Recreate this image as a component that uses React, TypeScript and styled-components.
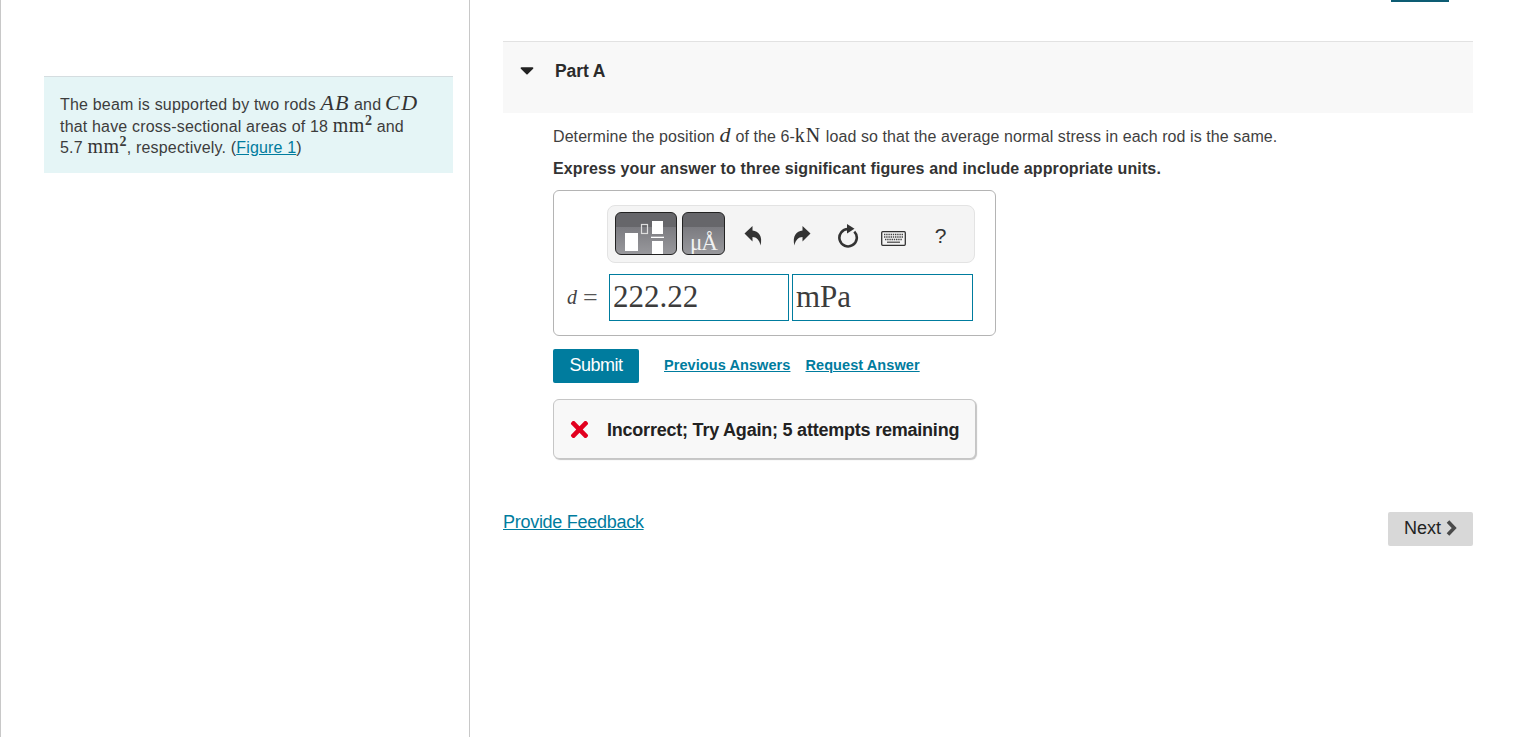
import styled, { createGlobalStyle } from 'styled-components';
import { FaCaretDown, FaTimes } from 'react-icons/fa';

const GlobalStyle = createGlobalStyle`
  html, body {
    margin: 0;
    padding: 0;
    background: #fff;
    overflow: hidden;
  }
  body {
    font-family: "Liberation Sans", Arial, sans-serif;
    color: #333;
  }
`;

const Page = styled.div`
  display: flex;
  height: 737px;
  width: 1529px;
  position: relative;
`;

const TopMark = styled.div`
  position: absolute;
  top: 0;
  left: 1391px;
  width: 58px;
  height: 2px;
  background: #0d5c73;
`;

const LeftColumn = styled.aside`
  box-sizing: border-box;
  width: 470px;
  flex: none;
  border-left: 1px solid #c8c8c8;
  border-right: 1px solid #c8c8c8;
  padding: 76px 16px 0 43px;
`;

const InfoBox = styled.div`
  box-sizing: border-box;
  height: 97px;
  background: #e5f5f6;
  border-top: 1px solid #d5dde0;
  padding: 17px 10px 0 16px;
  font-size: 16px;
  line-height: 21.5px;
  color: #3d3d3d;
  letter-spacing: 0.18px;
  white-space: nowrap;
`;

const Math = styled.span<{ $size?: number; $spacing?: number; $shift?: number }>`
  font-family: "Liberation Serif", "Times New Roman", serif;
  font-size: ${(p) => p.$size ?? 20}px;
  line-height: 0;
  letter-spacing: ${(p) => p.$spacing ?? 0.5}px;
  margin-left: ${(p) => p.$shift ?? 0}px;
  color: #333;
`;

const MathVar = styled(Math)`
  font-style: italic;
`;

const Sup = styled.sup`
  font-family: "Liberation Serif", serif;
  font-weight: bold;
  font-size: 14px;
  line-height: 0;
  vertical-align: 7px;
`;

const TextLink = styled.a`
  color: #007c9e;
  text-decoration: underline;
  cursor: pointer;
`;

const Main = styled.main`
  flex: 1;
  padding: 41px 56px 0 33px;
  min-width: 0;
`;

const PartHeader = styled.div`
  box-sizing: border-box;
  height: 72px;
  background: #f8f8f8;
  border-top: 1px solid #e2e2e2;
  display: flex;
  align-items: flex-start;
  padding: 18px 0 0 16px;
  gap: 20px;
`;

const Caret = styled.span`
  display: flex;
  width: 16px;
  height: 20px;
  align-items: center;
  justify-content: center;
  color: #222;
  font-size: 22px;
`;

const PartTitle = styled.h2`
  margin: 0;
  font-size: 17.5px;
  line-height: 22px;
  font-weight: bold;
  color: #2b2b2b;
  letter-spacing: -0.1px;
`;

const PartBody = styled.div`
  padding: 12px 0 0 50px;
`;

const Question = styled.p`
  margin: 0;
  font-size: 16px;
  line-height: 23px;
  color: #3f3f3f;
  letter-spacing: 0.08px;
`;

const Instruction = styled.p`
  margin: 9px 0 0;
  font-size: 16px;
  line-height: 23px;
  font-weight: bold;
  color: #333;
  letter-spacing: 0.11px;
`;

const AnswerBox = styled.div`
  box-sizing: border-box;
  margin-top: 10px;
  width: 443px;
  height: 146px;
  border: 1px solid #b4b4b4;
  border-radius: 6px;
  padding: 14px 0 0 13px;
`;

const Toolbar = styled.div`
  box-sizing: border-box;
  margin-left: 40px;
  width: 368px;
  height: 58px;
  background: #f4f4f4;
  border: 1px solid #e3e3e3;
  border-radius: 8px;
  display: flex;
  align-items: center;
  padding: 0 0 0 7px;
`;

const TemplateButton = styled.div<{ $width: number }>`
  box-sizing: border-box;
  position: relative;
  flex: none;
  width: ${(p) => p.$width}px;
  height: 43px;
  margin: 0 5px 2px 0;
  border: 1px solid #222;
  border-radius: 6px;
  overflow: hidden;
  background: linear-gradient(#66666a 0 14px, #7b7b80 14px, #98989c 100%);
  color: #fff;
`;

const UnitsGlyph = styled.span`
  position: absolute;
  left: 7px;
  bottom: -2px;
  font-family: "Liberation Serif", serif;
  font-size: 23px;
  line-height: 26px;
  letter-spacing: -1px;
  color: #f2f2f2;
  white-space: nowrap;
`;

const ToolIcon = styled.span<{ $width: number }>`
  display: flex;
  flex: none;
  width: ${(p) => p.$width}px;
  height: 32px;
  margin-top: 3px;
  align-items: center;
  justify-content: center;
  color: #333;
  font-size: 21px;
`;

const KeyboardSvg = styled.svg`
  margin-top: 6px;
`;

const InputRow = styled.div`
  display: flex;
  align-items: center;
  margin-top: 11px;
`;

const InputLabel = styled.span`
  flex: none;
  box-sizing: border-box;
  width: 29px;
  margin-right: 13px;
  font-family: "Liberation Serif", serif;
  font-size: 20px;
  color: #444;
  white-space: nowrap;
`;

const LabelVar = styled.i`
  margin-right: 6px;
`;

const LabelEquals = styled.span`
  font-size: 26px;
  line-height: 0;
  vertical-align: -2px;
  color: #555;
`;

const AnswerField = styled.div<{ $width: number }>`
  box-sizing: border-box;
  flex: none;
  width: ${(p) => p.$width}px;
  height: 47px;
  margin-right: 3px;
  border: 1px solid #007c9e;
  padding-left: 3px;
  font-family: "Liberation Serif", serif;
  font-size: 31px;
  line-height: 44px;
  color: #3c3c3c;
`;

const Actions = styled.div`
  display: flex;
  align-items: center;
  margin-top: 13px;
`;

const SubmitButton = styled.button`
  width: 86px;
  height: 34px;
  background: #007c9e;
  border: none;
  border-radius: 2px;
  color: #fff;
  font-family: "Liberation Sans", Arial, sans-serif;
  font-size: 18px;
  letter-spacing: -0.5px;
  padding: 0 0 2px;
  margin-right: 25px;
`;

const ActionLink = styled(TextLink)`
  font-size: 14.5px;
  font-weight: bold;
  margin: 0 15px 2px 0;
  letter-spacing: 0.08px;
`;

const Feedback = styled.div`
  box-sizing: border-box;
  margin-top: 16px;
  width: 423px;
  height: 60px;
  background: #f8f8f8;
  border: 1px solid #c6c6c6;
  border-radius: 6px;
  box-shadow: 1px 1px 1px #c4c4c4;
  display: flex;
  align-items: center;
  padding-left: 13px;
`;

const CrossIcon = styled.span`
  display: flex;
  color: #e2001f;
  font-size: 25px;
  margin-right: 15px;
`;

const FeedbackText = styled.span`
  margin-top: 2px;
  font-size: 18px;
  font-weight: bold;
  color: #222;
  letter-spacing: -0.22px;
`;

const Footer = styled.div`
  display: flex;
  justify-content: space-between;
  align-items: flex-start;
  margin-top: 52px;
`;

const FeedbackLink = styled(TextLink)`
  font-size: 18px;
  line-height: 22px;
  letter-spacing: -0.28px;
`;

const NextButton = styled.button`
  width: 85px;
  height: 34px;
  margin-top: 1px;
  background: #d8d8d8;
  border: none;
  border-radius: 2px;
  display: flex;
  align-items: center;
  justify-content: center;
  gap: 5px;
  padding: 0 0 2px;
  color: #222;
  font-family: "Liberation Sans", Arial, sans-serif;
  font-size: 18px;
`;

const TemplateIcon = () => (
  <svg width="60" height="41" viewBox="0 0 60 41" style={{ position: 'absolute', left: 0, top: 0 }}>
    <rect x="9" y="20" width="13" height="18" fill="#fff" />
    <rect x="25.5" y="11.5" width="6" height="9" fill="none" stroke="#ddd" strokeWidth="1.2" />
    <rect x="36" y="8" width="11" height="13" fill="#fff" />
    <rect x="35" y="23.7" width="13" height="1.3" fill="#fff" />
    <rect x="36" y="28" width="11" height="13" fill="#fff" />
  </svg>
);

const UndoIcon = ({ flip }: { flip?: boolean }) => (
  <svg width="19" height="21" viewBox="0 0 19 21" style={flip ? { transform: 'scaleX(-1)' } : undefined}>
    <path d="M0.5 8.5 L8.5 1 V5.5 C14.5 6 19 11 16.5 20.5 C15.5 15 12.5 12 8.5 12 V16.5 Z" fill="#333" />
  </svg>
);

const RefreshIcon = () => (
  <svg width="22" height="24" viewBox="0 0 22 24">
    <path d="M17.3 7.6 A8.7 8.7 0 1 1 11 5" fill="none" stroke="#333" strokeWidth="2.6" />
    <path d="M10 0 L17.5 4.8 L10 9.5 Z" fill="#333" />
  </svg>
);

const KeyboardIcon = () => (
  <KeyboardSvg width="25" height="15" viewBox="0 0 25 15">
    <rect x="0.7" y="0.7" width="23.6" height="13.6" rx="1" fill="#f4f4f4" stroke="#333" strokeWidth="1.3" />
    <path d="M3 3.5h19M3 6h19M4 8.5h17" stroke="#444" strokeWidth="1.3" strokeDasharray="1.4 .8" fill="none" />
    <path d="M6 11.2h13" stroke="#444" strokeWidth="1.2" fill="none" />
  </KeyboardSvg>
);

const NextChevron = () => (
  <svg width="11" height="16" viewBox="0 0 11 16">
    <path d="M2 1.5 L8.2 8 L2 14.5" fill="none" stroke="#4a4a4a" strokeWidth="3.6" />
  </svg>
);

export default function App() {
  return (
    <Page>
      <GlobalStyle />
      <TopMark />
      <LeftColumn>
        <InfoBox>
          The beam is supported by two rods <MathVar $size={22} $spacing={1}>AB</MathVar> and{' '}
          <MathVar $size={22} $spacing={1.6} $shift={-1}>CD</MathVar>
          <br />
          that have cross-sectional areas of 18 <Math>mm</Math>
          <Sup>2</Sup> and
          <br />
          5.7 <Math>mm</Math>
          <Sup>2</Sup>, respectively. (<TextLink>Figure 1</TextLink>)
        </InfoBox>
      </LeftColumn>
      <Main>
        <PartHeader>
          <Caret>
            <FaCaretDown />
          </Caret>
          <PartTitle>Part A</PartTitle>
        </PartHeader>
        <PartBody>
          <Question>
            Determine the position <MathVar $size={22}>d</MathVar> of the 6-<Math $size={20} $spacing={1}>kN</Math> load so that the average normal stress in each rod is the same.
          </Question>
          <Instruction>Express your answer to three significant figures and include appropriate units.</Instruction>
          <AnswerBox>
            <Toolbar>
              <TemplateButton $width={62}>
                <TemplateIcon />
              </TemplateButton>
              <TemplateButton $width={43}>
                <UnitsGlyph>μÅ</UnitsGlyph>
              </TemplateButton>
              <ToolIcon $width={47}>
                <UndoIcon />
              </ToolIcon>
              <ToolIcon $width={48}>
                <UndoIcon flip />
              </ToolIcon>
              <ToolIcon $width={45}>
                <RefreshIcon />
              </ToolIcon>
              <ToolIcon $width={47}>
                <KeyboardIcon />
              </ToolIcon>
              <ToolIcon $width={47}>?</ToolIcon>
            </Toolbar>
            <InputRow>
              <InputLabel>
                <LabelVar>d</LabelVar>
                <LabelEquals>=</LabelEquals>
              </InputLabel>
              <AnswerField $width={180}>222.22</AnswerField>
              <AnswerField $width={181}>mPa</AnswerField>
            </InputRow>
          </AnswerBox>
          <Actions>
            <SubmitButton>Submit</SubmitButton>
            <ActionLink>Previous Answers</ActionLink>
            <ActionLink>Request Answer</ActionLink>
          </Actions>
          <Feedback>
            <CrossIcon>
              <FaTimes />
            </CrossIcon>
            <FeedbackText>Incorrect; Try Again; 5 attempts remaining</FeedbackText>
          </Feedback>
        </PartBody>
        <Footer>
          <FeedbackLink>Provide Feedback</FeedbackLink>
          <NextButton>
            Next
            <NextChevron />
          </NextButton>
        </Footer>
      </Main>
    </Page>
  );
}
